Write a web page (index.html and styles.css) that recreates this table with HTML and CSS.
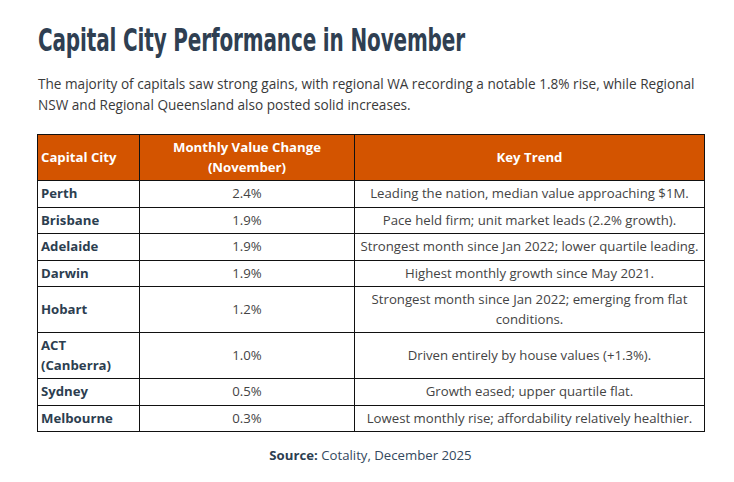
FILE: index.html
```html
<!DOCTYPE html>
<html lang="en">
<head>
<meta charset="utf-8">
<title>Capital City Performance in November</title>
<link rel="stylesheet" href="styles.css">
</head>
<body>
<main class="page">
  <h1 class="title"><span class="title-text">Capital City Performance in November</span></h1>
  <p class="intro">The majority of capitals saw strong gains, with regional WA recording a notable 1.8% rise, while Regional NSW and Regional Queensland also posted solid increases.</p>
  <table class="perf">
    <colgroup>
      <col class="c-city">
      <col class="c-change">
      <col class="c-trend">
    </colgroup>
    <thead>
      <tr>
        <th class="left">Capital City</th>
        <th>Monthly Value Change (November)</th>
        <th>Key Trend</th>
      </tr>
    </thead>
    <tbody>
      <tr><td class="city">Perth</td><td>2.4%</td><td>Leading the nation, median value approaching $1M.</td></tr>
      <tr><td class="city">Brisbane</td><td>1.9%</td><td>Pace held firm; unit market leads (2.2% growth).</td></tr>
      <tr><td class="city">Adelaide</td><td>1.9%</td><td>Strongest month since Jan 2022; lower quartile leading.</td></tr>
      <tr><td class="city">Darwin</td><td>1.9%</td><td>Highest monthly growth since May 2021.</td></tr>
      <tr><td class="city">Hobart</td><td>1.2%</td><td>Strongest month since Jan 2022; emerging from flat conditions.</td></tr>
      <tr><td class="city">ACT (Canberra)</td><td>1.0%</td><td>Driven entirely by house values (+1.3%).</td></tr>
      <tr><td class="city">Sydney</td><td>0.5%</td><td>Growth eased; upper quartile flat.</td></tr>
      <tr><td class="city">Melbourne</td><td>0.3%</td><td>Lowest monthly rise; affordability relatively healthier.</td></tr>
    </tbody>
  </table>
  <p class="source"><strong>Source:</strong> Cotality, December 2025</p>
</main>
</body>
</html>
```
FILE: styles.css
```css
html, body {
  margin: 0;
  padding: 0;
  background: #ffffff;
}

.page {
  width: 667px;
  padding: 0 30px 0 37px;
  font-family: "Open Sans", "DejaVu Sans", sans-serif;
  color: #3a3a3a;
}

.title {
  margin: 20px 0 0 1px;
  font-family: "DejaVu Sans Condensed", "DejaVu Sans", sans-serif;
  font-weight: bold;
  font-size: 32px;
  line-height: 40px;
  color: #2f3f52;
  white-space: nowrap;
}

.title-text {
  display: inline-block;
  transform: scaleX(0.694);
  transform-origin: left center;
  letter-spacing: -0.2px;
}

.intro {
  margin: 13px 0 0 1px;
  font-size: 13.6px;
  line-height: 21px;
  color: #3a3a3a;
}

.perf {
  margin-top: 19px;
  width: 667px;
  border-collapse: collapse;
  table-layout: fixed;
  font-size: 13.2px;
  line-height: 19.5px;
}

.c-city { width: 102px; }
.c-change { width: 215px; }
.c-trend { width: 350px; }

.perf th,
.perf td {
  border: 1px solid #111;
  padding: 3px 3px;
  text-align: center;
  vertical-align: middle;
}

.perf th {
  background: #d35400;
  color: #ffffff;
  font-weight: 700;
}

.perf th.left {
  text-align: left;
}

.perf td {
  color: #444;
}

.perf td.city {
  text-align: left;
  font-weight: 700;
  color: #2c3e50;
}

.source {
  margin: 13px 0 0;
  text-align: center;
  font-size: 13.2px;
  line-height: 20px;
  color: #34495e;
}

.source strong {
  color: #2c3e50;
}
```
